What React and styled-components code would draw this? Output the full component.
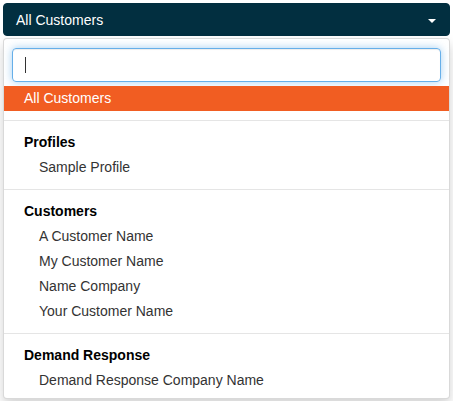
import React from "react";
import styled, { createGlobalStyle } from "styled-components";

const GlobalStyle = createGlobalStyle`
  * { box-sizing: border-box; }
  body {
    margin: 0;
    background: #ffffff;
    font-family: "Liberation Sans", Arial, sans-serif;
    font-size: 14px;
  }
`;

const Wrapper = styled.div`
  padding: 3px;
  width: 453px;
`;

const Toggle = styled.div`
  height: 33px;
  background-color: #022f40;
  border: 1px solid #022f40;
  border-radius: 4px;
  color: #ffffff;
  font-size: 14px;
  display: flex;
  align-items: center;
  justify-content: space-between;
  padding: 0 12px;
`;

const Caret = styled.span`
  width: 0;
  height: 0;
  border-left: 4px solid transparent;
  border-right: 4px solid transparent;
  border-top: 4px solid #ffffff;
  margin-right: 1px;
  margin-top: 2px;
`;

const Menu = styled.div`
  margin-top: 2px;
  background: #ffffff;
  border: 1px solid rgba(0, 0, 0, 0.15);
  border-radius: 4px;
  box-shadow: 0 6px 12px rgba(0, 0, 0, 0.175);
  padding: 5px 0;
`;

const SearchBox = styled.div`
  padding: 4px 8px;
`;

const SearchInput = styled.div`
  height: 34px;
  border: 1px solid #66afe9;
  border-radius: 4px;
  box-shadow: inset 0 1px 1px rgba(0, 0, 0, 0.075), 0 0 8px rgba(102, 175, 233, 0.6);
  display: flex;
  align-items: center;
  padding: 0 12px;
`;

const Cursor = styled.span`
  width: 1px;
  height: 16px;
  background: #333333;
`;

const Option = styled.div`
  height: 25px;
  line-height: 25px;
  padding-left: ${(p) => (p.$nested ? "35px" : "20px")};
  color: ${(p) => (p.$active ? "#ffffff" : "#333333")};
  background: ${(p) => (p.$active ? "#f15d22" : "transparent")};
  white-space: nowrap;
`;

const GroupHeader = styled.div`
  height: 25px;
  line-height: 25px;
  padding-left: 20px;
  font-weight: bold;
  color: #000000;
`;

const Divider = styled.div`
  height: 1px;
  margin: 9px 0;
  background: #e5e5e5;
`;

const groups = [
  { title: "Profiles", items: ["Sample Profile"] },
  {
    title: "Customers",
    items: ["A Customer Name", "My Customer Name", "Name Company", "Your Customer Name"],
  },
  { title: "Demand Response", items: ["Demand Response Company Name"] },
];

const App = () => (
  <Wrapper>
    <GlobalStyle />
    <Toggle>
      <span>All Customers</span>
      <Caret />
    </Toggle>
    <Menu>
      <SearchBox>
        <SearchInput>
          <Cursor />
        </SearchInput>
      </SearchBox>
      <Option $active>All Customers</Option>
      {groups.map((g) => (
        <React.Fragment key={g.title}>
          <Divider />
          <GroupHeader>{g.title}</GroupHeader>
          {g.items.map((it) => (
            <Option key={it} $nested>
              {it}
            </Option>
          ))}
        </React.Fragment>
      ))}
    </Menu>
  </Wrapper>
);

export default App;
